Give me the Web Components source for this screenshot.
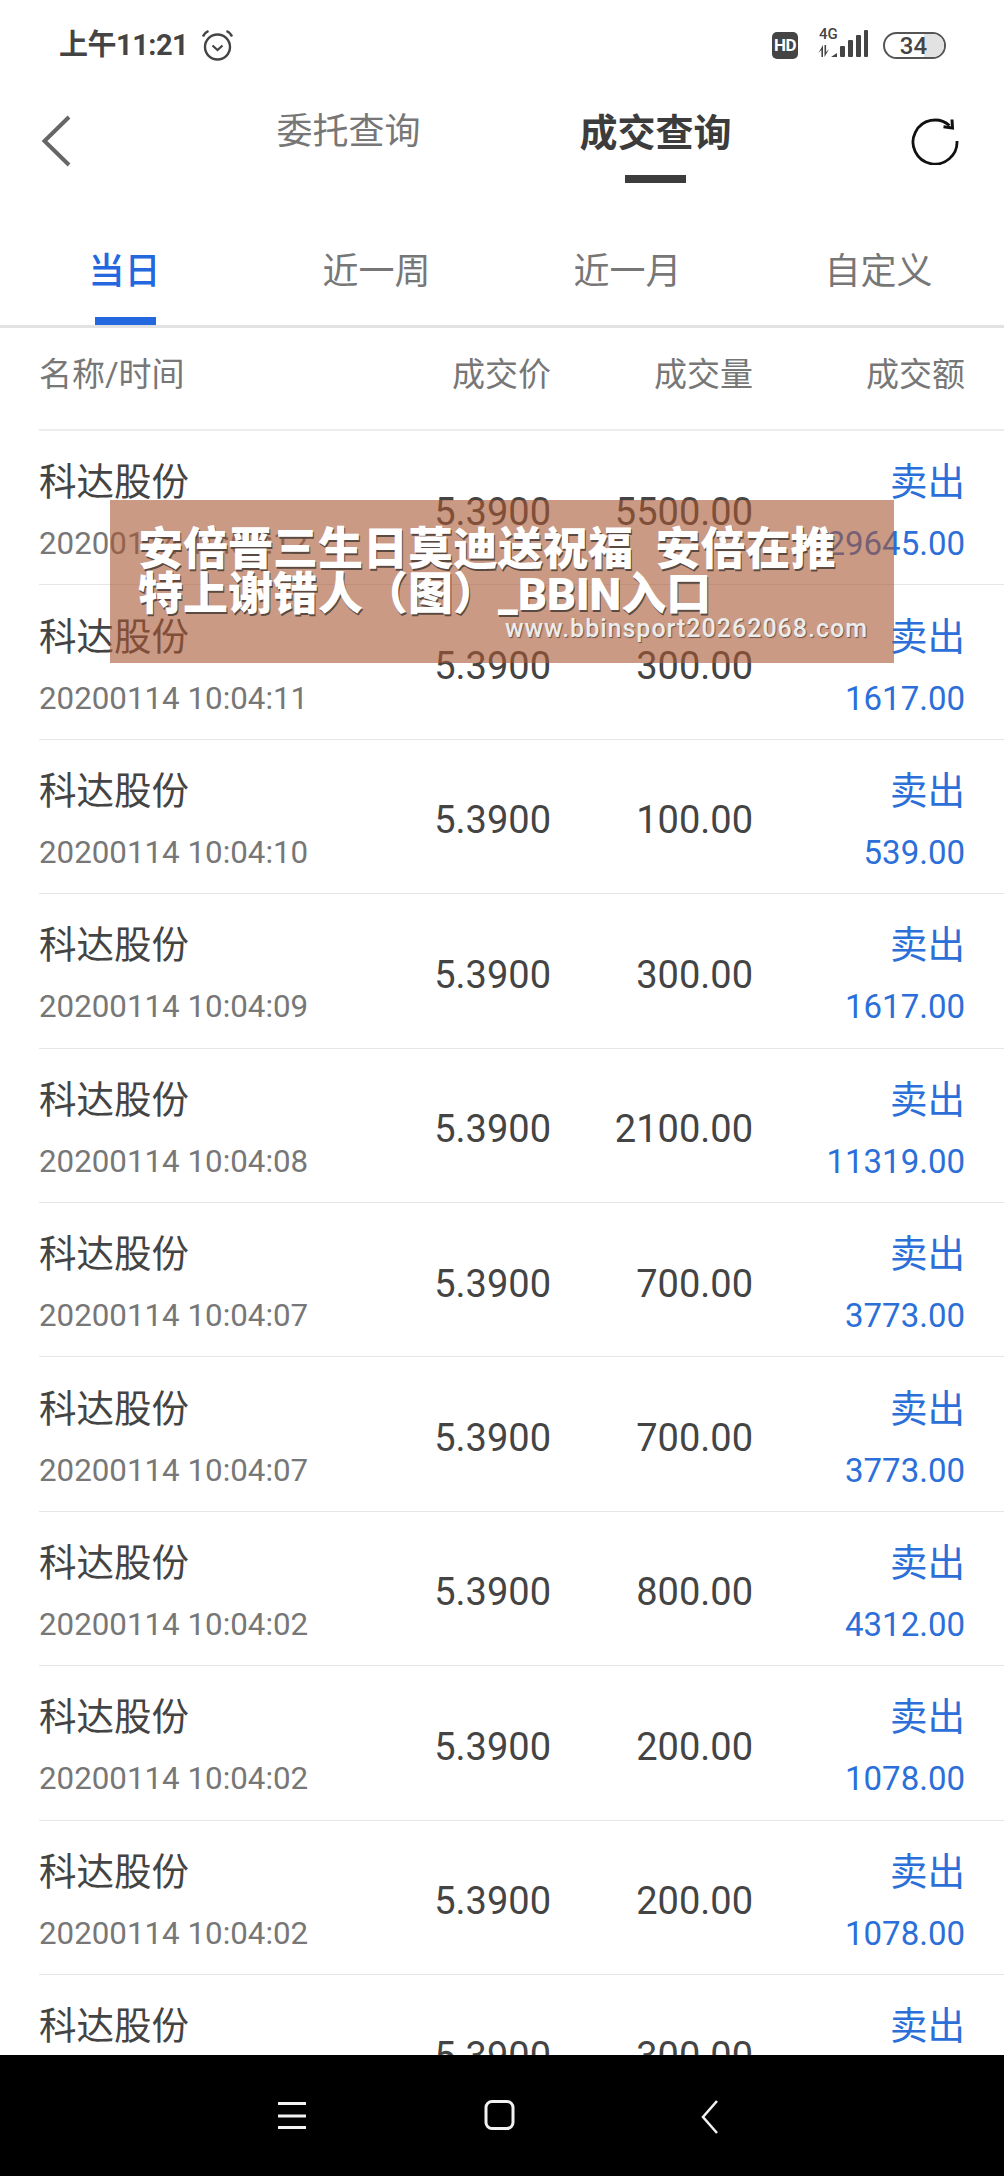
<!DOCTYPE html>
<html lang="zh-CN">
<head>
<meta charset="utf-8">
<title>成交查询</title>
<style>
  html, body { margin: 0; height: 100%; background: #fff; }
  body { font-family: Roboto, "Noto Sans CJK SC", sans-serif; overflow: hidden; }
  #app { position: relative; display: flex; flex-direction: column; width: 1004px; height: 2176px; overflow: hidden; }
  #list { flex: 1; min-height: 0; overflow: hidden; }
</style>
</head>
<body>
<div id="app">
  <status-bar></status-bar>
  <title-bar></title-bar>
  <range-tabs></range-tabs>
  <list-header></list-header>
  <div id="list"></div>
  <system-nav></system-nav>
  <promo-banner url="www.bbinsport20262068.com">安倍晋三生日莫迪送祝福&nbsp;&nbsp;安倍在推<br>特上谢错人（图）_BBIN入口</promo-banner>
</div>

<script>
class StatusBar extends HTMLElement {
  constructor() {
    super();
    this.attachShadow({ mode: 'open' });
    this.shadowRoot.innerHTML = `
      <style>
        :host { display: flex; align-items: center; height: 90px; padding: 0 58px 0 59px; box-sizing: border-box; color: #444; }
        .time { font-size: 29px; font-weight: 700; letter-spacing: -0.5px; line-height: 34px; }
        .alarm { margin-left: 13px; }
        .right { margin-left: auto; display: flex; align-items: center; }
        .hd { width: 26px; height: 27px; border-radius: 5px; background: #444; color: #fff; font-size: 17px; font-weight: 700; line-height: 27px; text-align: center; letter-spacing: -0.5px; }
        .net { position: relative; width: 54px; height: 30px; margin-left: 18px; }
        .net span { position: absolute; left: 3px; top: -3px; font-size: 15px; font-weight: 500; line-height: 14px; }
        .battery { position: relative; width: 63px; height: 27px; margin-left: 13px; border: 2px solid #555; border-radius: 14px; box-sizing: border-box; font-size: 24px; font-weight: 500; line-height: 24px; text-align: center; overflow: hidden; }
        .battery i { position: absolute; right: 0; top: 0; bottom: 0; width: 20px; background: #e2e2e2; }
        .battery span { position: relative; left: -1px; }
      </style>
      <div class="time">上午11:21</div>
      <svg class="alarm" width="33" height="33" viewBox="0 0 33 33" fill="none" stroke="#444">
        <circle cx="16.5" cy="18" r="12.5" stroke-width="2.4"/>
        <path d="M11.5 16.5l5 4.500 5-4.500" stroke-width="2.2"/>
        <path d="M2 7.500C3 5 5 3 7.500 2M31 7.500C30 5 28 3 25.500 2" stroke-width="2.4"/>
      </svg>
      <div class="right">
        <div class="hd">HD</div>
        <div class="net">
          <span>4G</span>
          <svg width="54" height="30" viewBox="0 0 54 30" fill="#444">
            <path d="M7 15v12h-1.600v-7l-3 3zM8.500 27V15h1.600v7l3-3z"/>
            <path d="M15 27l6-4v4z"/>
            <rect x="24" y="16" width="5" height="11" rx="1"/>
            <rect x="32" y="10" width="5" height="17" rx="1"/>
            <rect x="40" y="5" width="5" height="22" rx="1"/>
            <rect x="48" y="0" width="4" height="27" rx="1"/>
          </svg>
        </div>
        <div class="battery"><i></i><span>34</span></div>
      </div>
    `;
  }
}

class TitleBar extends HTMLElement {
  constructor() {
    super();
    this.attachShadow({ mode: 'open' });
    this.shadowRoot.innerHTML = `
      <style>
        :host { display: grid; grid-template-columns: 1fr 614px 1fr; align-items: start; height: 100px; }
        .back { padding: 25px 0 0 41px; }
        .titles { display: flex; }
        .item { flex: 1; text-align: center; font-size: 36px; line-height: 50px; color: #777; padding-top: 17px; }
        .item.on { font-size: 38px; font-weight: 700; color: #3c3c3c; padding-top: 18px; }
        .item.on::after { content: ""; display: block; width: 61px; height: 8px; margin: 17px auto 0; background: #3c3c3c; }
        .refresh { justify-self: end; padding: 27px 45px 0 0; }
        svg { display: block; }
      </style>
      <div class="back">
        <svg width="30" height="52" viewBox="0 0 30 52" fill="none" stroke="#666" stroke-width="4"><path d="M28 2L3.500 26 28 50"/></svg>
      </div>
      <div class="titles">
        <div class="item">委托查询</div>
        <div class="item on">成交查询</div>
      </div>
      <div class="refresh">
        <svg width="48" height="48" viewBox="0 0 48 48" fill="none" stroke="#111" stroke-width="2.800">
          <path d="M38.500 8.500A22 22 0 1 0 46 24"/>
          <path d="M32.500 9.800l9 1.200-.5-8.500" stroke-width="3"/>
        </svg>
      </div>
    `;
  }
}

class RangeTabs extends HTMLElement {
  constructor() {
    super();
    this.attachShadow({ mode: 'open' });
    this.shadowRoot.innerHTML = `
      <style>
        :host { display: flex; height: 138px; border-bottom: 3px solid #e2e2e2; box-sizing: border-box; }
        div { flex: 1; position: relative; text-align: center; padding-top: 57px; font-size: 36px; line-height: 50px; color: #777; }
        .on { color: #2468e0; font-weight: 500; left: -1px; }
        .on::after { content: ""; position: absolute; left: 50%; bottom: 0; width: 61px; height: 8px; margin-left: -30px; background: #2468e0; }
      </style>
      <div class="on">当日</div><div>近一周</div><div>近一月</div><div>自定义</div>
    `;
  }
}

class ListHeader extends HTMLElement {
  constructor() {
    super();
    this.attachShadow({ mode: 'open' });
    this.shadowRoot.innerHTML = `
      <style>
        :host { display: grid; grid-template-columns: 312px 200px 202px 212px; margin-left: 39px; padding-right: 39px; height: 103px; align-items: center; border-bottom: 2px solid #ececec; box-sizing: border-box; padding-bottom: 14px; font-size: 33px; color: #777; }
        div:not(:first-of-type) { text-align: right; }
      </style>
      <div>名称/时间</div><div>成交价</div><div>成交量</div><div>成交额</div>
    `;
  }
}

class TradeRow extends HTMLElement {
  constructor() {
    super();
    this.attachShadow({ mode: 'open' });
  }
  connectedCallback() {
    const get = n => this.getAttribute(n);
    this.shadowRoot.innerHTML = `
      <style>
        :host { display: grid; grid-template-columns: 312px 200px 202px 212px; grid-template-rows: 1fr; margin-left: 39px; padding-right: 39px; padding-top: 8px; height: 154.400px; box-sizing: border-box; border-bottom: 1.500px solid #e6e6e6; align-items: center; }
        .num { text-align: right; font-size: 38px; color: #444; }
        .stack { display: flex; flex-direction: column; gap: 19px; padding-bottom: 4px; }
        .big { font-size: 37.500px; line-height: 50px; color: #444; }
        .small { font-size: 31.300px; line-height: 36px; color: #777; }
        .end { text-align: right; color: #2c6fd8; }
        .end .big { font-size: 37.500px; color: inherit; }
        .end .small { color: inherit; font-size: 33px; }
      </style>
      <div class="stack"><div class="big">${get('name')}</div><div class="small">${get('time')}</div></div>
      <div class="num">${get('price')}</div>
      <div class="num">${get('qty')}</div>
      <div class="stack end"><div class="big">${get('side')}</div><div class="small">${get('amount')}</div></div>
    `;
  }
}

class SystemNav extends HTMLElement {
  constructor() {
    super();
    this.attachShadow({ mode: 'open' });
    this.shadowRoot.innerHTML = `
      <style>
        :host { display: block; flex: none; height: 121px; background: #000; }
        svg { display: block; }
      </style>
      <svg width="1004" height="121" viewBox="0 0 1004 121" fill="none" stroke="#f2f2f2" stroke-width="3">
        <path d="M278 48.500h28M278 61h28M278 72.500h28"/>
        <rect x="486" y="46.500" width="27" height="27" rx="6"/>
        <path d="M717 46L703 62l14 16" stroke-width="2.500"/>
      </svg>
    `;
  }
}

class PromoBanner extends HTMLElement {
  constructor() {
    super();
    this.attachShadow({ mode: 'open' });
    this.shadowRoot.innerHTML = `
      <style>
        :host { position: absolute; left: 110px; top: 500px; width: 784px; height: 163px; box-sizing: border-box; padding: 27px 0 0 28px; background: rgba(168, 87, 50, .6); }
        .head { font-size: 45px; line-height: 45px; font-weight: 900; color: #fff; white-space: nowrap; text-shadow: 1px 2px 0 #5a4a42; }
        .url { position: absolute; right: 26px; top: 114px; font-size: 25px; line-height: 30px; letter-spacing: 1px; color: #ececec; white-space: nowrap; font-weight: 500; text-shadow: 1px 1px 1px #6b5548; }
      </style>
      <div class="head"><slot></slot></div>
      <div class="url"></div>
    `;
  }
  connectedCallback() {
    this.shadowRoot.querySelector('.url').textContent = this.getAttribute('url');
  }
}

customElements.define('status-bar', StatusBar);
customElements.define('title-bar', TitleBar);
customElements.define('range-tabs', RangeTabs);
customElements.define('list-header', ListHeader);
customElements.define('trade-row', TradeRow);
customElements.define('system-nav', SystemNav);
customElements.define('promo-banner', PromoBanner);

const trades = [
  ['10:04:12', '5500.00', '29645.00'],
  ['10:04:11', '300.00', '1617.00'],
  ['10:04:10', '100.00', '539.00'],
  ['10:04:09', '300.00', '1617.00'],
  ['10:04:08', '2100.00', '11319.00'],
  ['10:04:07', '700.00', '3773.00'],
  ['10:04:07', '700.00', '3773.00'],
  ['10:04:02', '800.00', '4312.00'],
  ['10:04:02', '200.00', '1078.00'],
  ['10:04:02', '200.00', '1078.00'],
  ['10:04:01', '300.00', '1617.00']
];
const list = document.getElementById('list');
trades.forEach(([t, qty, amount]) => {
  const row = document.createElement('trade-row');
  row.setAttribute('name', '科达股份');
  row.setAttribute('time', '20200114 ' + t);
  row.setAttribute('price', '5.3900');
  row.setAttribute('qty', qty);
  row.setAttribute('side', '卖出');
  row.setAttribute('amount', amount);
  list.appendChild(row);
});
</script>
</body>
</html>
